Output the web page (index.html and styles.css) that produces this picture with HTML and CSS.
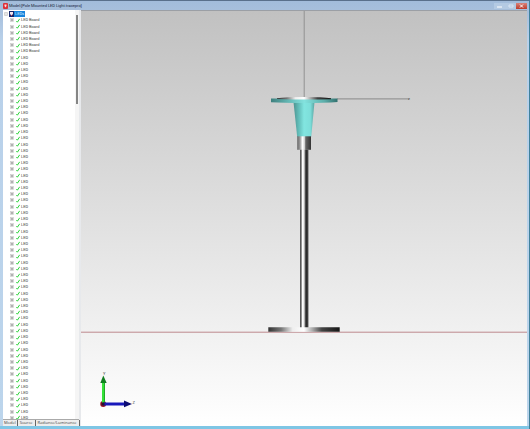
FILE: index.html
```html
<!DOCTYPE html>
<html lang="en">
<head>
<meta charset="utf-8">
<title>Model:[Pole Mounted LED Light.tracepro]</title>
<link rel="stylesheet" href="styles.css">
</head>
<body>
<div class="window">
  <header class="titlebar">
    <svg class="app-icon" viewBox="0 0 5 6" aria-hidden="true"><rect width="5" height="6" rx="1" fill="#dc3038"/><path d="M1.5 1.5h2v1.5l-1 1.5-1-1.5z" fill="#ffd8dc"/></svg>
    <h1 class="title">Model:[Pole Mounted LED Light.tracepro]</h1>
    <div class="controls">
      <button class="control" aria-label="Minimize"><svg viewBox="0 0 11 6"><path d="M3 4h5" stroke="#fff"/></svg></button>
      <button class="control" aria-label="Maximize"><svg viewBox="0 0 11 6"><path d="M4 2h4v2H4z" fill="none" stroke="#d9e5f3"/></svg></button>
      <button class="control close" aria-label="Close"><svg viewBox="0 0 11 6"><path d="M4 1.5l3 3M7 1.5l-3 3" stroke="#fff"/></svg></button>
    </div>
  </header>
  <main class="content">
    <aside class="sidebar">
      <div class="tree-area">
        <ul class="tree" id="tree">
          <li class="row root">
            <button class="expander" aria-label="Collapse"><svg viewBox="0 0 4 4"><path d="M.5.5h3v3h-3z" fill="#fff" stroke="#d5d5d5"/><path d="M1 2h2" stroke="#999" stroke-width=".5"/></svg></button>
            <svg class="root-icon" viewBox="0 0 5 6" aria-hidden="true"><rect width="5" height="6" fill="#15266a"/><path d="M1 1h3v2L3 4H2L1 3z" fill="#f4e6ec"/><path d="M2 4h1v1H2z" fill="#cc4256"/></svg>
            <span class="label">LEDs</span>
          </li>
        </ul>
        <div class="scrollbar"><div class="thumb"></div></div>
      </div>
      <nav class="tabs">
        <button class="tab">Model</button>
        <button class="tab">Source</button>
        <button class="tab wide">Radiance/Luminance</button>
      </nav>
    </aside>
    <section class="viewport">
      <svg class="scene" viewBox="81 11 446 415" preserveAspectRatio="none" role="img" aria-label="Pole mounted light, side view">
        <defs>
          <linearGradient id="metal"><stop offset="0" stop-color="#333"/><stop offset=".18" stop-color="#777"/><stop offset=".34" stop-color="#eee"/><stop offset=".5" stop-color="#fff"/><stop offset=".62" stop-color="#aaa"/><stop offset=".75" stop-color="#444"/><stop offset="1" stop-color="#161616"/></linearGradient>
          <linearGradient id="pole"><stop offset="0" stop-color="#444"/><stop offset=".15" stop-color="#777"/><stop offset=".28" stop-color="#fff"/><stop offset=".48" stop-color="#e5e5e5"/><stop offset=".62" stop-color="#555"/><stop offset=".8" stop-color="#202020"/><stop offset="1" stop-color="#666"/></linearGradient>
          <linearGradient id="collar"><stop offset="0" stop-color="#666"/><stop offset=".2" stop-color="#999"/><stop offset=".38" stop-color="#fff"/><stop offset=".52" stop-color="#ddd"/><stop offset=".62" stop-color="#666"/><stop offset="1" stop-color="#333"/></linearGradient>
          <linearGradient id="glass"><stop offset="0" stop-color="#4d9491"/><stop offset=".25" stop-color="#62bdb9"/><stop offset=".5" stop-color="#82e5e0"/><stop offset=".8" stop-color="#7ddeda"/><stop offset="1" stop-color="#59a5a2"/></linearGradient>
          <linearGradient id="rim"><stop offset="0" stop-color="#3e7f7d"/><stop offset=".25" stop-color="#62b5b2"/><stop offset=".5" stop-color="#83e2de"/><stop offset=".8" stop-color="#5daeaa"/><stop offset="1" stop-color="#32706e"/></linearGradient>
        </defs>
        <path d="M304.200 10V98" stroke="#929292"/>
        <path d="M337 98.900H409" stroke="#777" stroke-width=".8"/>
        <text class="axis-label" x="408" y="100">z</text>
        <path d="M81 332.200H527" stroke="#bd898d"/>
        <path d="M293.500 102H314.500L311.200 137H297.200z" fill="url(#glass)"/>
        <path d="M271 98.500H337.500V102Q325 103 304 103T271 102.300z" fill="url(#rim)"/>
        <path d="M277 98.300Q285 97 304 97T331 98.300V99.300Q304 100 277 99.100z" fill="url(#metal)"/>
        <path d="M297.200 136.300H311V149.800H297.200z" fill="url(#collar)"/>
        <path d="M300 149.800H308.500V328H300z" fill="url(#pole)"/>
        <path d="M268.300 327.300H339.700V331.800H268.300z" fill="url(#metal)"/>
        <circle cx="103.200" cy="404" r="3" fill="#a21525"/>
        <path d="M102 383H105V402.500L102 404z" fill="#35e238"/>
        <path d="M104.500 383V403" stroke="#169421" stroke-width=".7"/>
        <path d="M103.300 375.500L106.700 383H100.300z" fill="#117e20"/>
        <path d="M103 402.500H125V405.500H103z" fill="#1818bb"/>
        <path d="M124 400.500L132 404L124 407.200z" fill="#0c0c72"/>
        <path d="M101.500 402.500h3v3h-3z" fill="#2b102e"/>
        <text class="axis-label" x="103" y="375">Y</text>
        <text class="axis-label" x="132.500" y="404">Z</text>
      </svg>
    </section>
  </main>
</div>
<script src="app.js"></script>
</body>
</html>
```
FILE: styles.css
```css
* { box-sizing: border-box; }
body { margin: 0; font: 4px/6px Roboto, "Liberation Sans", sans-serif; color: #444; }
button { margin: 0; padding: 0; border: 0; background: none; font: inherit; color: inherit; }
svg { display: block; }

.window {
  height: 100vh;
  display: flex;
  flex-direction: column;
  padding: 0 2px 3px 3px;
  border-top: 1px solid #59708c;
  border-right: 1px solid #40809b;
  background: linear-gradient(#a2bcdb, #a7bfdc 10px, #b9d1ea 40px, #bcd5ec calc(100% - 3px), #7fc6e5 calc(100% - 3px));
}
.titlebar { flex: none; height: 9px; display: flex; align-items: center; gap: 1px; padding-top: 1px; }
.app-icon { width: 5px; height: 6px; }
.title { flex: 1; margin: 0; font-size: 4px; font-weight: 400; color: #17243a; }
.controls { display: flex; height: 6px; }
.control { width: 11px; background: #b4cae3; }
.control svg { width: 11px; height: 6px; }
.close { background: linear-gradient(#d8827a, #bd3a2b); }

.content { flex: 1; min-height: 0; display: flex; }
.sidebar { flex: none; width: 78px; display: flex; flex-direction: column; background: #f2f2f2; border-right: 2px solid #e7e9ec; }
.tree-area { flex: 1; min-height: 0; display: flex; overflow: hidden; background: #fff; }
.tree { flex: 1; display: grid; grid-auto-rows: 1fr; margin: 1px 0 -2px; padding: 0; list-style: none; }
.row { min-height: 0; display: flex; align-items: center; gap: 2px; padding-left: 7px; }
.row.root { gap: 1px; padding-left: 1px; }
.expander { width: 4px; height: 4px; }
.root-icon { width: 5px; height: 6px; }
.tick { width: 4px; height: 5px; }
.row .label { margin-left: -1px; }
.root .label { background: #1683dc; color: #d5ecff; padding: 0 1px; }
.scrollbar { flex: none; width: 4px; padding: 5px 1px 0; background: #f5f5f5; }
.thumb { height: 22%; background: #858585; }
.tabs { flex: none; height: 7px; display: flex; border-top: 1px solid #aaa; background: #eee; font-family: "Open Sans", sans-serif; }
.tab { padding: 0 2px; border-right: 1px solid #666; white-space: nowrap; }
.tab:first-child { padding: 0 1px; }
.tab.wide { flex: 1; }

.viewport { flex: 1; min-width: 0; background: linear-gradient(#c1c1c1, #e0e0e0 50%, #fff); border-top: 1px solid #9b9fa5; }
.scene { width: 100%; height: 100%; }
.axis-label { font-size: 4px; fill: #444; }
```
FILE: app.js
```js
const BOARDS = 6;
const LEDS = 59;
const tree = document.getElementById("tree");
const names = [...Array(BOARDS).fill("LED Board"), ...Array(LEDS).fill("LED")];

for (const name of names) {
  const row = document.createElement("li");
  row.className = "row";
  row.innerHTML = `
    <button class="expander" aria-label="Expand"><svg viewBox="0 0 4 4"><rect x=".5" y=".5" width="3" height="3" fill="#eee" stroke="#ccc" stroke-width=".7"/><path d="M1 2h2M2 1v2" stroke="#777" stroke-width=".6"/></svg></button>
    <svg class="tick" viewBox="0 0 4 5" aria-hidden="true"><path d="M.4 3l1 1.200L3.700.8" fill="none" stroke="#2bd238" stroke-width="1"/></svg>
    <span class="label">${name}</span>`;
  tree.append(row);
}
```
